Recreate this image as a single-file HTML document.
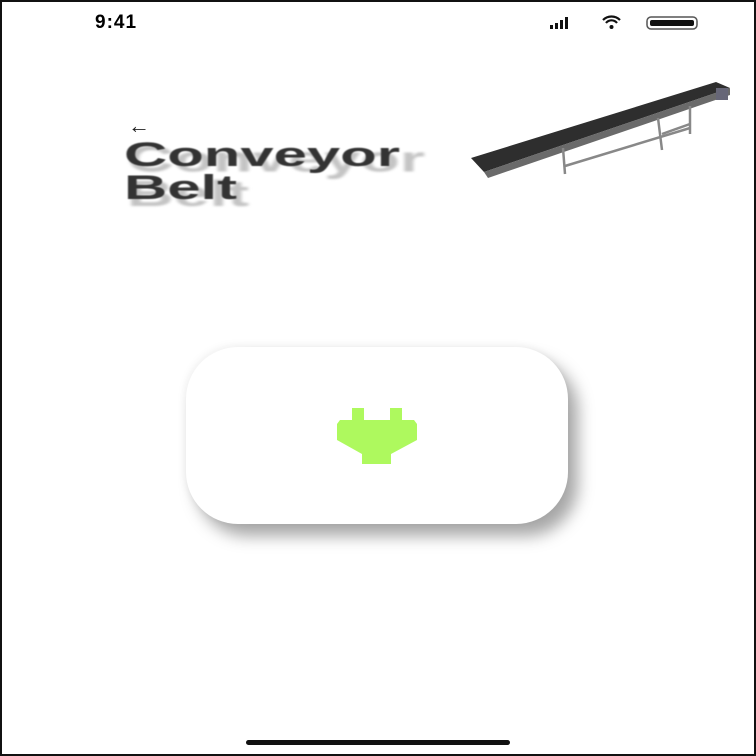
<!DOCTYPE html>
<html><head><style>
html,body{margin:0;padding:0}
body{width:756px;height:756px;position:relative;overflow:hidden;background:#fff;font-family:"Liberation Sans",sans-serif}
.frame{position:absolute;inset:0;border:2px solid #111;box-sizing:border-box}
.t{position:absolute;font-weight:bold;font-size:34px;line-height:33px;letter-spacing:0;transform-origin:left top;white-space:nowrap}
</style></head><body>
<div class="frame"></div>
<div style="position:absolute;left:95px;top:12px;font-size:19px;font-weight:bold;letter-spacing:1px">9:41</div>
<svg style="position:absolute;left:548px;top:15px" width="155" height="16">
<rect x="2" y="10" width="3" height="4" fill="#111"/><rect x="7" y="8" width="3" height="6" fill="#111"/><rect x="12" y="5" width="3" height="9" fill="#111"/><rect x="17" y="2" width="3" height="12" fill="#111"/>
<path d="M55 5a12 12 0 0 1 17 0M58 8a7 7 0 0 1 11 0" stroke="#111" stroke-width="2.2" fill="none"/><circle cx="63.5" cy="12" r="2" fill="#111"/>
<rect x="99" y="2" width="50" height="12" rx="4" fill="none" stroke="#555" stroke-width="1.5"/><rect x="102" y="5" width="44" height="6" rx="2" fill="#111"/>
</svg>
<div style="position:absolute;left:128px;top:113px;font-size:22px;color:#222">&#8592;</div>
<div class="t" style="left:127px;top:143px;color:#c4c4c4;transform:scale(1.9,1.05);filter:blur(1px)">Conveyor<br>Belt</div>
<div class="t" style="left:124px;top:139px;color:#333;transform:scale(1.76,1);filter:blur(0.4px)">Conveyor<br>Belt</div>
<svg style="position:absolute;left:468px;top:78px" width="270" height="104">
<polygon points="3,80 248,4 262,10 16,94" fill="#2e2e2e"/>
<polygon points="16,94 262,10 262,17 20,100" fill="#6a6a6a"/>
<g stroke="#888" stroke-width="2.5" fill="none">
<line x1="95" y1="70" x2="97" y2="96"/><line x1="190" y1="40" x2="194" y2="72"/><line x1="222" y1="28" x2="222" y2="56"/>
<line x1="97" y1="88" x2="222" y2="50"/><line x1="194" y1="56" x2="222" y2="46"/>
</g>
<rect x="248" y="10" width="12" height="12" fill="#667"/>
</svg>
<div style="position:absolute;left:186px;top:347px;width:382px;height:177px;border-radius:52px;background:#fff;box-shadow:10px 12px 16px rgba(0,0,0,0.35),-2px -2px 8px rgba(0,0,0,0.05)"></div>
<svg style="position:absolute;left:337px;top:408px" width="80" height="56">
<path d="M15 0h12v12h26V0h12v12h12l3 4v16l-26 14v10H25V46L0 32V16l3-4h12z" fill="#aef95e"/>
</svg>
<div style="position:absolute;left:246px;top:740px;width:264px;height:5px;border-radius:3px;background:#111"></div>
</body></html>
